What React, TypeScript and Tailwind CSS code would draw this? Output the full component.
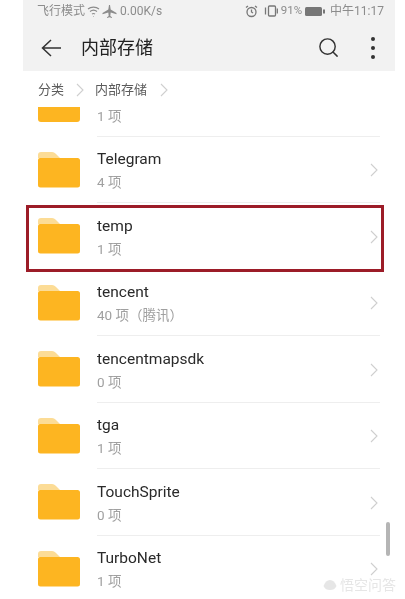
import { Search } from 'lucide-react';

const FONT = "font-['Roboto','Noto_Sans_CJK_SC',sans-serif]";

const folders = [
  { name: 'Telegram', info: '4 项' },
  { name: 'temp', info: '1 项' },
  { name: 'tencent', info: '40 项（腾讯）' },
  { name: 'tencentmapsdk', info: '0 项' },
  { name: 'tga', info: '1 项' },
  { name: 'TouchSprite', info: '0 项' },
  { name: 'TurboNet', info: '1 项' },
];

function FolderIcon() {
  return (
    <svg width="42" height="36" viewBox="0 0 42 36" className="shrink-0">
      <path d="M0 3a3 3 0 0 1 3-3h11c2 0 3 1 4.500 2.500L22 6H0z" fill="#fcdc96" />
      <path d="M0 8a2 2 0 0 1 2-2h37.500a2.500 2.500 0 0 1 2.500 2.500v24.500a2.500 2.500 0 0 1-2.500 2.500h-37a2.500 2.500 0 0 1-2.500-2.500z" fill="#fdb521" />
    </svg>
  );
}

function Chevron() {
  return (
    <svg width="8" height="14" viewBox="0 0 8 14" fill="none" stroke="#cfcfcf" strokeWidth="1.100" className="shrink-0">
      <path d="M1 1l6 6-6 6" />
    </svg>
  );
}

function StatusBar() {
  return (
    <div className="flex h-[21px] items-center justify-between pl-[14px] pr-[11px] pt-[1px] text-[12px] leading-none text-[#8c8c8c]">
      <div className="flex items-center gap-[2px]">
        <span>飞行模式</span>
        <svg width="13" height="11" viewBox="0 0 13 11" fill="none" stroke="#8c8c8c" strokeWidth="1.100">
          <path d="M1 3c3-2.500 8-2.500 11 0M3 5.500c2-1.600 5-1.600 7 0M5 8c1-.7 2-.7 3 0" />
          <path d="M6.500 10v.5" />
        </svg>
        <svg width="15" height="13" viewBox="0 0 15 13" fill="#8c8c8c">
          <path d="M7 0h1l.7 4.500L14.500 8v1.200L8.700 7.500 8.300 11l1.700 1.200V13L7.500 12.300 5 13v-.8L6.700 11l-.4-3.500L.5 9.200V8l5.800-3.500z" />
        </svg>
        <span className="ml-[1px]">0.00K/s</span>
      </div>
      <div className="flex items-center gap-[3px]">
        <svg width="13" height="13" viewBox="0 0 13 13" fill="none" stroke="#777" strokeWidth="1.300" className="mr-[3px]">
          <circle cx="6.500" cy="7" r="4.500" />
          <path d="M6.500 4.500V7l1.500 1M1 2.500l2-1.500M12 2.500l-2-1.500" />
        </svg>
        <svg width="14" height="12" viewBox="0 0 14 12" fill="none" stroke="#777" strokeWidth="1.300">
          <rect x="4.500" y="1" width="7" height="10" rx="1" />
          <path d="M1.500 2.500v7" />
          <path d="M13.300 3.500v5" />
        </svg>
        <span className="text-[11.500px]">91%</span>
        <svg width="20" height="9" viewBox="0 0 20 9">
          <rect x="0" y="0" width="17" height="9" rx="1.500" fill="#777" />
          <rect x="18" y="2.500" width="2" height="4" fill="#777" />
        </svg>
        <span className="ml-[2px]">中午11:17</span>
      </div>
    </div>
  );
}

function Header() {
  return (
    <div className="bg-[#f2f2f2]">
      <StatusBar />
      <div className="flex h-[50px] items-center pl-[18px] pr-[20px] pt-[3px]">
        <svg width="20" height="18" viewBox="0 0 20 18" fill="none" stroke="#333" strokeWidth="1.500">
          <path d="M10 1L1.500 9l8.500 8M1.500 9H20" />
        </svg>
        <span className="ml-[20px] flex-1 text-[18px] leading-none text-[#222]">内部存储</span>
        <Search className="mr-[31px] h-[23px] w-[23px] text-[#333]" strokeWidth={1.500} />
        <div className="flex flex-col gap-[5px]">
          <span className="h-[4px] w-[4px] rounded-full bg-[#333]" />
          <span className="h-[4px] w-[4px] rounded-full bg-[#333]" />
          <span className="h-[4px] w-[4px] rounded-full bg-[#333]" />
        </div>
      </div>
    </div>
  );
}

function Breadcrumb() {
  return (
    <div className="flex h-[36px] items-center pl-[15px] pt-[1px] text-[13px] leading-none text-[#5c5c5c]">
      <span>分类</span>
      <span className="ml-[12px]"><Chevron /></span>
      <span className="ml-[11px]">内部存储</span>
      <span className="ml-[13px]"><Chevron /></span>
    </div>
  );
}

function Row({ name, info }: { name: string; info: string }) {
  return (
    <div className="flex h-[66.5px] items-center pl-[15px] pr-[15px]">
      <FolderIcon />
      <div className="ml-[17px] flex h-full min-w-0 flex-1 items-center justify-between border-b border-[#eeeeee] pr-[2px]">
        <div className="pt-[1px]">
          <div className="text-[15.500px] leading-[20px] text-[#2a2a2a]">{name}</div>
          <div className="mt-[5px] text-[13.500px] leading-[16px] text-[#a0a0a0]">{info}</div>
        </div>
        <div className="mt-[2px]">
          <Chevron />
        </div>
      </div>
    </div>
  );
}

export default function App() {
  return (
    <div className={`relative h-[599px] w-[405px] overflow-hidden bg-white blur-[0.5px] ${FONT}`}>
      <div className="ml-[23px] w-[372px]">
        <Header />
        <Breadcrumb />
        {/* row cut off by the breadcrumb */}
        <div className="flex h-[29.500px] items-start pl-[15px] pr-[15px]">
          <div className="h-[15px] w-[42px] rounded-b-[3px] bg-[#fdb521]" />
          <div className="ml-[17px] h-full flex-1 border-b border-[#eeeeee] pt-[1px] text-[13.500px] leading-[16px] text-[#a0a0a0]">
            1 项
          </div>
        </div>
        {folders.map((f) => (
          <Row key={f.name} name={f.name} info={f.info} />
        ))}
      </div>

      {/* red highlight drawn over the screenshot */}
      <div className="absolute left-[26px] top-[205px] h-[67px] w-[358px] border-[3px] border-[#9c1c28]" />

      <div className="absolute left-[386px] top-[522px] h-[34px] w-[4px] rounded-full bg-[#b5b5b5]" />

      {/* watermark */}
      <div className="absolute left-[323px] top-[578px] flex items-center gap-[3px] text-[14px] leading-none text-[#e6e6e6]">
        <svg width="14" height="12" viewBox="0 0 14 12" fill="#e6e6e6">
          <path d="M7 1c3 0 5 2 6.500 6-1.500 3-3.500 4-6.500 4S2 10 .5 7C2 3 4 1 7 1z" />
        </svg>
        <span>悟空问答</span>
      </div>
    </div>
  );
}
